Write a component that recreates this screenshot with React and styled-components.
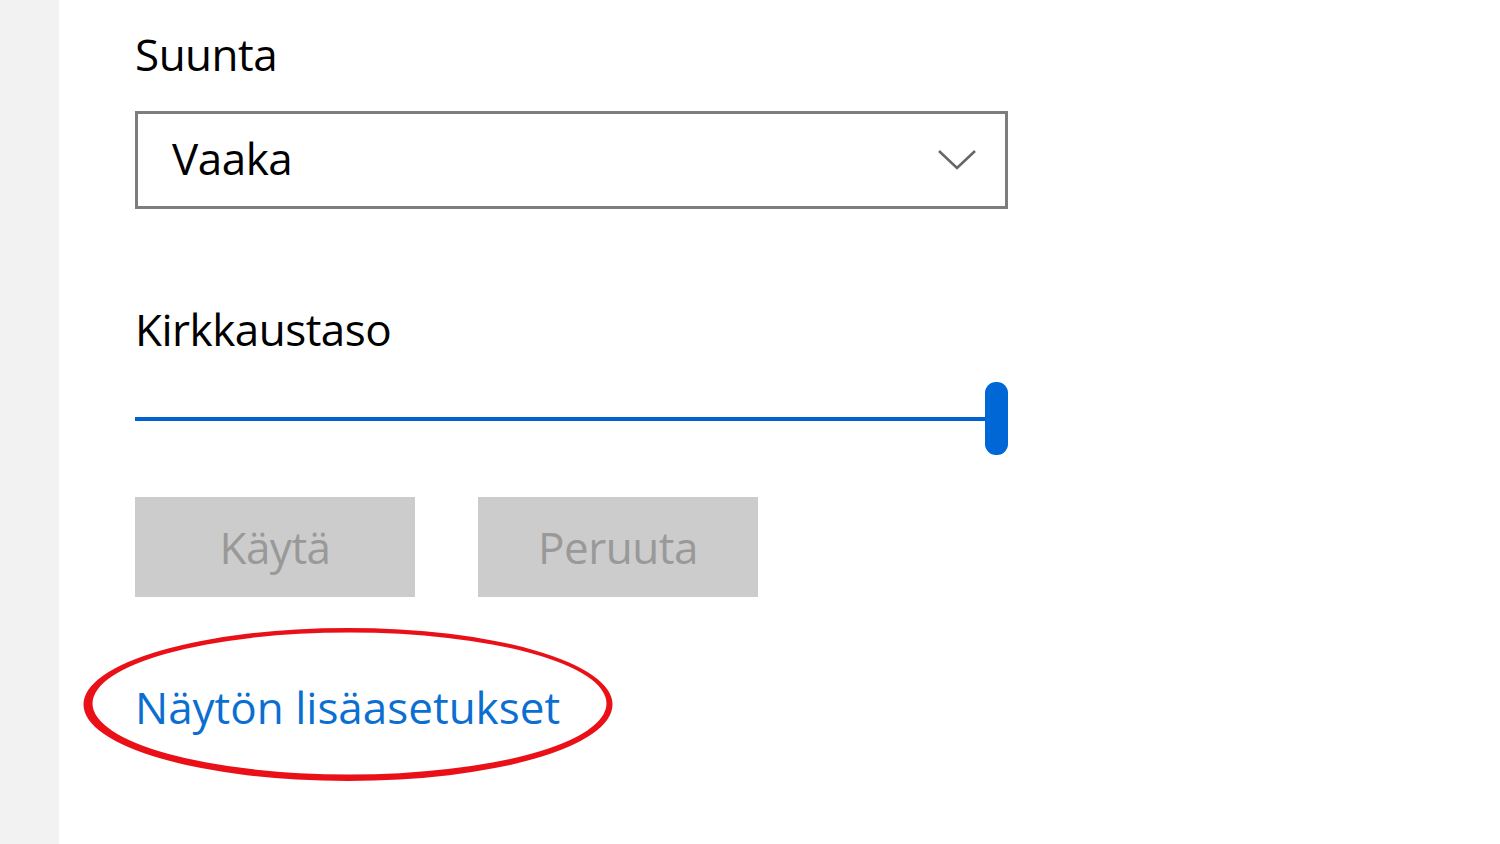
import React from "react";
import styled, { createGlobalStyle } from "styled-components";

const GlobalStyle = createGlobalStyle`
  html, body {
    margin: 0;
    padding: 0;
    background: #ffffff;
  }
  body {
    font-family: "Open Sans", "Noto Sans", sans-serif;
    color: #000;
  }
`;

const Page = styled.div`
  display: flex;
  width: 1500px;
  height: 844px;
  overflow: hidden;
`;

const Sidebar = styled.div`
  width: 59px;
  flex-shrink: 0;
  background: #f2f2f2;
`;

const Main = styled.div`
  flex: 1;
  padding: 24px 0 0 76px;
  display: flex;
  flex-direction: column;
`;

const Label = styled.div`
  font-size: 44px;
  line-height: 60px;
  letter-spacing: -0.5px;
  color: #000;
  margin-top: ${(p) => p.top || 0}px;
`;

const Select = styled.div`
  box-sizing: border-box;
  width: 873px;
  height: 98px;
  margin-top: 27px;
  border: 3px solid #7d7d7d;
  display: flex;
  align-items: center;
  justify-content: space-between;
  padding: 0 28px 5px 34px;
  font-size: 44px;
  letter-spacing: -0.5px;
`;

const Chevron = () => (
  <svg width="40" height="22" viewBox="0 0 40 22" style={{ marginTop: 4 }}>
    <path d="M2 2 L20 19 L38 2" fill="none" stroke="#666" strokeWidth="2.5" />
  </svg>
);

const SliderRow = styled.div`
  width: 873px;
  height: 73px;
  margin-top: 23px;
  display: flex;
  align-items: center;
`;

const Track = styled.div`
  flex: 1;
  height: 4px;
  background: #0063cc;
`;

const Thumb = styled.div`
  width: 23px;
  height: 73px;
  border-radius: 11px;
  background: #0067d6;
`;

const Buttons = styled.div`
  display: flex;
  gap: 63px;
  margin-top: 42px;
`;

const Button = styled.div`
  width: 280px;
  height: 100px;
  background: #cccccc;
  color: #999999;
  font-size: 44px;
  letter-spacing: -0.5px;
  display: flex;
  align-items: center;
  justify-content: center;
`;

const LinkWrap = styled.div`
  position: relative;
  margin-top: 80px;
  align-self: flex-start;
`;

const Link = styled.a`
  display: block;
  font-size: 44px;
  line-height: 60px;
  letter-spacing: 0;
  color: #0b6fd1;
  text-decoration: none;
`;

const Ring = styled.svg`
  position: absolute;
  left: -54px;
  top: -52px;
  pointer-events: none;
`;

const ellipsePath = (cx, cy, rx, ry) =>
  `M${cx - rx},${cy} a${rx},${ry} 0 1,0 ${2 * rx},0 a${rx},${ry} 0 1,0 ${-2 * rx},0 Z`;

export default function App() {
  return (
    <>
      <GlobalStyle />
      <Page>
        <Sidebar />
        <Main>
          <Label>Suunta</Label>
          <Select>
            <span>Vaaka</span>
            <Chevron />
          </Select>
          <Label top={90}>Kirkkaustaso</Label>
          <SliderRow>
            <Track />
            <Thumb />
          </SliderRow>
          <Buttons>
            <Button>Käytä</Button>
            <Button>Peruuta</Button>
          </Buttons>
          <LinkWrap>
            <Link href="#">Näytön lisäasetukset</Link>
            <Ring width="540" height="162" viewBox="0 0 540 162">
              <path
                fillRule="evenodd"
                fill="#ea1018"
                d={`${ellipsePath(267, 79.5, 264.5, 76.5)} ${ellipsePath(268.5, 78.5, 257, 71)}`}
              />
            </Ring>
          </LinkWrap>
        </Main>
      </Page>
    </>
  );
}
